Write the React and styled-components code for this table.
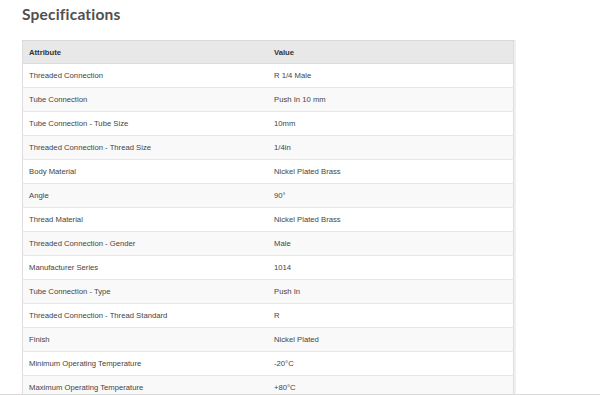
import styled, { createGlobalStyle } from "styled-components";

const GlobalStyle = createGlobalStyle`
    html, body {
        margin: 0;
        padding: 0;
        background: #fff;
        overflow: hidden;
    }
`

const Page = styled.div`
    padding: 4px 86px 0 22px;
    font-family: "Liberation Sans", Arial, sans-serif;
`
const Title = styled.h2`
    margin: 0 0 16px 0;
    font-family: "Lato", "DejaVu Sans", sans-serif;
    font-size: 15.5px;
    font-weight: 700;
    letter-spacing: 0.2px;
    color: #505050;
    line-height: 20px;
`
const Table = styled.table`
    width: 492px;
    border-collapse: collapse;
    border: 1px solid #dedede;
    box-shadow: 2px 0 0 #f0f0f0;
`
const HeadCell = styled.th`
    text-align: left;
    font-size: 7.7px;
    font-weight: 700;
    color: #333;
    background: #e8e8e8;
    height: 22px;
    width: ${p => p.$w || "auto"};
    padding: 0 0 0 ${p => p.$pad || 6}px;
    border-top: 1px solid #d8d8d8;
    border-bottom: 1px solid #dcdcdc;
`
const Row = styled.tr`
    background: ${p => p.$odd ? "#f9f9f9" : "#fff"};
`
const Cell = styled.td`
    font-size: 7.7px;
    color: #444;
    height: 23px;
    padding: 0 0 0 ${p => p.$pad || 6}px;
    border-bottom: 1px solid #e6e6e6;
`
const BottomLine = styled.div`
    position: fixed;
    left: 0;
    right: 0;
    bottom: 0;
    height: 1px;
    background: #d9d9d9;
`

const specs = [
    ["Threaded Connection", "R 1/4 Male"],
    ["Tube Connection", "Push In 10 mm"],
    ["Tube Connection - Tube Size", "10mm"],
    ["Threaded Connection - Thread Size", "1/4in"],
    ["Body Material", "Nickel Plated Brass"],
    ["Angle", "90°"],
    ["Thread Material", "Nickel Plated Brass"],
    ["Threaded Connection - Gender", "Male"],
    ["Manufacturer Series", "1014"],
    ["Tube Connection - Type", "Push In"],
    ["Threaded Connection - Thread Standard", "R"],
    ["Finish", "Nickel Plated"],
    ["Minimum Operating Temperature", "-20°C"],
    ["Maximum Operating Temperature", "+80°C"],
]

export default function App(){
    return(
        <>
            <GlobalStyle/>
            <Page>
                <Title>Specifications</Title>
                <Table>
                    <thead>
                        <tr>
                            <HeadCell $w="238px">Attribute</HeadCell>
                            <HeadCell $pad={7}>Value</HeadCell>
                        </tr>
                    </thead>
                    <tbody>
                        {specs.map(([attr, val], i) => (
                            <Row key={attr} $odd={i % 2 === 1}>
                                <Cell>{attr}</Cell>
                                <Cell $pad={7}>{val}</Cell>
                            </Row>
                        ))}
                    </tbody>
                </Table>
            </Page>
            <BottomLine/>
        </>
    )
}
